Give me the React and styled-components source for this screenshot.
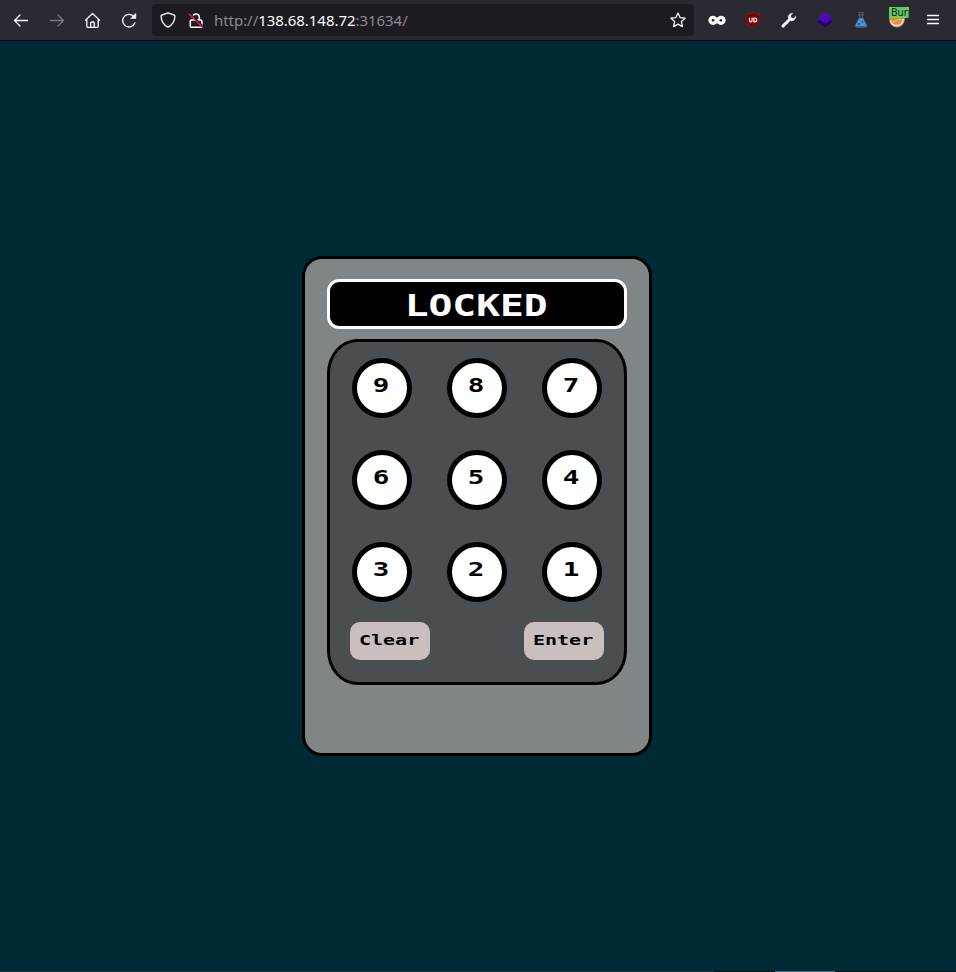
import React from 'react';
import styled, { createGlobalStyle } from 'styled-components';

const GlobalStyle = createGlobalStyle`
  * { box-sizing: border-box; }
  html, body { margin: 0; padding: 0; background: #002b36; }
`;

const Page = styled.div`
  display: flex;
  flex-direction: column;
  width: 956px;
  height: 972px;
  overflow: hidden;
  background: #002b36;
`;

const Toolbar = styled.header`
  display: flex;
  align-items: center;
  flex: none;
  height: 41px;
  padding: 0 3px 1px;
  background: #2b2a33;
  border-bottom: 1px solid #0c0c0d;
`;

const ToolSlot = styled.span`
  display: flex;
  align-items: center;
  justify-content: center;
  width: 36px;
  height: 40px;
  color: ${(p) => (p.$dim ? '#7b7a80' : '#fbfbfe')};
`;

const Glyph = styled.svg`
  display: block;
  flex: none;
  width: 18px;
  height: 18px;
  fill: none;
  stroke: currentColor;
  stroke-width: 1.3;
  stroke-linecap: round;
  stroke-linejoin: round;
`;

const AddressBar = styled.div`
  display: flex;
  align-items: center;
  width: 542px;
  height: 32px;
  margin: 0 5px;
  padding: 0 7px;
  border-radius: 4px;
  background: #1c1b22;
  color: #fbfbfe;
`;

const Url = styled.span`
  flex: 1;
  margin-left: 9px;
  font: 15px/30px 'Noto Sans', sans-serif;
  letter-spacing: -0.045px;
  white-space: nowrap;
  color: #8b8a91;
`;

const Host = styled.span`
  color: #fbfbfe;
`;

const LockSlot = styled.span`
  margin-left: 10px;
`;

const BurpSlot = styled.span`
  display: flex;
  flex-direction: column;
  align-items: center;
  width: 36px;
  height: 40px;
  padding-top: 7px;
`;

const BurpBadge = styled.span`
  width: 20px;
  height: 11px;
  margin-left: 4px;
  padding-left: 2px;
  overflow: hidden;
  background: #60cf62;
  color: #15141a;
  font: 10px/11px 'Noto Sans', sans-serif;
  white-space: nowrap;
`;

const Stage = styled.main`
  display: flex;
  flex: 1;
  justify-content: center;
  padding: 215px 2px 0 0;
`;

const Keypad = styled.section`
  display: flex;
  flex-direction: column;
  align-items: center;
  width: 350px;
  height: 500px;
  padding-top: 20px;
  border: 3px solid #000;
  border-radius: 20px;
  background: #808588;
`;

const Display = styled.div`
  display: flex;
  align-items: center;
  justify-content: center;
  width: 300px;
  height: 50px;
  padding: 4px 2px 0 0;
  border: 3px solid #fff;
  border-radius: 12px;
  background: #000;
  color: #fff;
`;

const Panel = styled.div`
  width: 300px;
  height: 346px;
  margin-top: 10px;
  padding: 16px 20px 0;
  border: 3px solid #000;
  border-radius: 10%;
  background: #4b4e50;
`;

const DigitGrid = styled.div`
  display: grid;
  grid-template-columns: repeat(3, 60px);
  grid-auto-rows: 60px;
  gap: 32px 35px;
  padding-left: 2px;
`;

const DigitKey = styled.button`
  display: flex;
  align-items: center;
  justify-content: center;
  width: 60px;
  height: 60px;
  padding: 0 2px 7px 0;
  border: 5px solid #000;
  border-radius: 50%;
  background: #fff;
  color: #000;
`;

const Actions = styled.div`
  display: flex;
  justify-content: space-between;
  margin-top: 20px;
`;

const ActionKey = styled.button`
  display: flex;
  align-items: center;
  justify-content: center;
  width: 80px;
  height: 38px;
  padding: 0 2px 2px 0;
  border: 0;
  border-radius: 10px;
  background: #c8bfbe;
  color: #000;
`;

const WideText = styled.span`
  display: block;
  font: bold ${(p) => p.$size}px/1 'DejaVu Sans Mono', monospace;
  transform: scaleX(${(p) => p.$stretch});
`;

const BottomEdge = styled.footer`
  display: flex;
  flex: none;
  height: 1px;
`;

const EdgePiece = styled.span`
  width: ${(p) => p.$width}px;
  background: ${(p) => p.$color};
`;

const ArrowIcon = ({ flip }) => (
  <Glyph viewBox="0 0 18 18">
    <path d={flip ? 'M2.5 9.5h13M10 4l5.5 5.5L10 15' : 'M15.5 9.5h-13M8 4L2.5 9.5 8 15'} />
  </Glyph>
);

const HomeIcon = () => (
  <Glyph viewBox="0.5 0 18 18">
    <path d="M2 9.3L9 2.4l7 6.9M3.3 8.3v7a1 1 0 0 0 1 1h9.4a1 1 0 0 0 1-1v-7M7.2 16v-4a1 1 0 0 1 1-1h1.6a1 1 0 0 1 1 1v4" />
  </Glyph>
);

const ReloadIcon = () => (
  <Glyph viewBox="0 0 18 18">
    <path d="M14.9 11.8A6.3 6.3 0 1 1 14.1 6" />
    <path d="M15.8 2.6v4.8H11z" fill="currentColor" strokeWidth="0.6" />
  </Glyph>
);

const ShieldIcon = () => (
  <Glyph viewBox="0 0 18 18">
    <path d="M9 1.8l6.3 2.4c.4.2.6.5.6.9 0 5-2.2 8.8-6.9 11.1C4.3 13.9 2.1 10.1 2.1 5.1c0-.4.2-.7.6-.9z" />
  </Glyph>
);

const LockIcon = () => (
  <Glyph viewBox="0 0 18 18">
    <path d="M5.8 5.500a3.300 3.300 0 0 1 6.500.8V9M4.500 9h9.200a1.200 1.200 0 0 1 1.200 1.200v4.900a1.200 1.200 0 0 1-1.200 1.200H4.500a1.200 1.200 0 0 1-1.200-1.200v-4.900A1.200 1.200 0 0 1 4.500 9z" strokeWidth="1.600" />
    <path d="M2.800 2.800l13.300 13" stroke="#1c1b22" strokeWidth="2.200" />
    <path d="M2.300 3.300l13.300 13" stroke="#e2214b" strokeWidth="1.600" />
  </Glyph>
);

const StarIcon = () => (
  <Glyph viewBox="0 0 18 18">
    <path d="M9 2l2.100 4.600 5 .6-3.700 3.400 1 5L9 13.100l-4.400 2.500 1-5L1.900 7.200l5-.6z" />
  </Glyph>
);

const InfinityIcon = () => (
  <Glyph viewBox="0 0 18 18">
    <path
      d="M9 9.300C7.700 7.400 6.400 6.300 5 6.300a3 3 0 0 0 0 6c1.400 0 2.700-1.100 4-3s2.600-3 4-3a3 3 0 0 1 0 6c-1.400 0-2.700-1.100-4-3z"
      strokeWidth="3.300"
    />
  </Glyph>
);

const BlockerIcon = () => (
  <Glyph viewBox="0 0 18 18">
    <path
      d="M9 1.300c1.900 1.200 4.400 1.900 6.800 2v5.300c0 4.200-3.100 6.400-6.800 8.200-3.700-1.800-6.800-4-6.800-8.200V3.300c2.400-.1 4.900-.8 6.800-2z"
      fill="#800000"
      stroke="#5d3438"
      strokeWidth="0.7"
    />
    <path d="M5.500 7v2.500a1.300 1.300 0 0 0 2.600 0V7M9.900 7v3.800h.9a1.900 1.900 0 0 0 0-3.800z" stroke="#fff" strokeWidth="1.200" />
  </Glyph>
);

const WrenchIcon = () => (
  <Glyph viewBox="0 0 18 18">
    <path
      d="M15.900 5.200a4.300 4.300 0 0 1-5.700 4.500L4.100 16a1.400 1.400 0 0 1-2.100-2l6.300-6.100A4.300 4.300 0 0 1 12.900 2.200L10.800 4.500l.4 2.300 2.300.4z"
      fill="currentColor"
      strokeWidth="0.3"
    />
  </Glyph>
);

const LayersIcon = () => (
  <Glyph viewBox="0 0 18 18">
    <path d="M1 10.800L9 5.300l8 5.500-8 5.700z" fill="#23006f" stroke="none" />
    <path d="M1 7L9 1.300 17 7l-8 5.800z" fill="#4a0bb0" stroke="none" />
  </Glyph>
);

const FlaskIcon = () => (
  <Glyph viewBox="0 0 18 18">
    <path d="M6.500 1.800h5M6.500 3.800h5M7.700 4v2.500L3.300 14.200c-.5 1.100.1 2 1.200 2h9c1.100 0 1.700-.9 1.200-2L10.300 6.500V4" stroke="#626c75" strokeWidth="0.9" />
    <path d="M7.600 7h2.800l4 7.300c.3.700 0 1.300-.6 1.300H4.300c-.6 0-.9-.6-.6-1.300z" fill="#4b8ee0" stroke="none" />
    <circle cx="7" cy="12.800" r="0.900" fill="#1d3553" stroke="none" />
    <circle cx="10.300" cy="11" r="0.800" fill="#1d3553" stroke="none" />
  </Glyph>
);

const FaceGraphic = styled.svg`
  display: block;
  width: 18px;
  height: 10px;
`;

const MenuIcon = () => (
  <Glyph viewBox="0 0 18 18">
    <path d="M3.500 4.500h11M3.500 8.500h11M3.500 12.500h11" />
  </Glyph>
);

const rightTools = [InfinityIcon, BlockerIcon, WrenchIcon, LayersIcon, FlaskIcon];
const digits = [9, 8, 7, 6, 5, 4, 3, 2, 1];

export default function App() {
  return (
    <Page>
      <GlobalStyle />
      <Toolbar>
        <ToolSlot><ArrowIcon /></ToolSlot>
        <ToolSlot $dim><ArrowIcon flip /></ToolSlot>
        <ToolSlot><HomeIcon /></ToolSlot>
        <ToolSlot><ReloadIcon /></ToolSlot>
        <AddressBar>
          <ShieldIcon />
          <LockSlot><LockIcon /></LockSlot>
          <Url>http://<Host>138.68.148.72</Host>:31634/</Url>
          <StarIcon />
        </AddressBar>
        {rightTools.map((Icon, i) => (
          <ToolSlot key={i}><Icon /></ToolSlot>
        ))}
        <BurpSlot>
          <BurpBadge>Burp</BurpBadge>
          <FaceGraphic viewBox="0 0 18 10">
            <path d="M1 0h16c0 5-3 9.500-8 9.500S1 5 1 0z" fill="#b98c66" />
            <path d="M2.500 0h12c-.3 4.500-2.600 6.500-5.500 6.500S3 4.500 2.500 0z" fill="#f08a2c" />
            <path d="M2.300 2.500c1.200 3.700 3.700 5.200 6.700 5 3-.2 5.700-2.600 6.300-6.500" fill="none" stroke="#f3ece4" strokeWidth="1.500" />
            <path d="M5 4.300l4-2.300 3.500-.6" fill="none" stroke="#fbd1a0" strokeWidth="1" />
          </FaceGraphic>
        </BurpSlot>
        <ToolSlot><MenuIcon /></ToolSlot>
      </Toolbar>
      <Stage>
        <Keypad>
          <Display><WideText $size={30} $stretch={1.32}>LOCKED</WideText></Display>
          <Panel>
            <DigitGrid>
              {digits.map((d) => (
                <DigitKey key={d}><WideText $size={20} $stretch={1.38}>{d}</WideText></DigitKey>
              ))}
            </DigitGrid>
            <Actions>
              <ActionKey><WideText $size={14} $stretch={1.43}>Clear</WideText></ActionKey>
              <ActionKey><WideText $size={14} $stretch={1.43}>Enter</WideText></ActionKey>
            </Actions>
          </Panel>
        </Keypad>
      </Stage>
      <BottomEdge>
        <EdgePiece $width={714} $color="#202f3a" />
        <EdgePiece $width={61} $color="#02141a" />
        <EdgePiece $width={60} $color="#3b6b93" />
        <EdgePiece $width={121} $color="#02141a" />
      </BottomEdge>
    </Page>
  );
}
